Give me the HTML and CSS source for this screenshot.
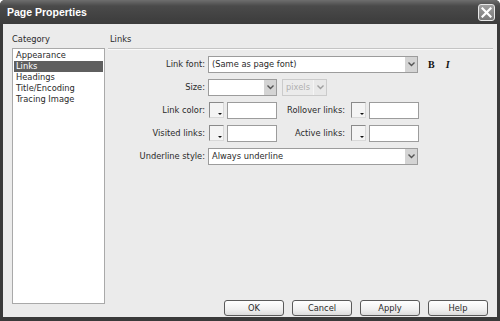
FILE: index.html
```html
<!DOCTYPE html>
<html lang="en">
<head>
    <meta charset="UTF-8">
    <title>Page Properties</title>
    <link rel="stylesheet" href="styles.css">
</head>
<body>
    <div class="dialog">
        <div class="titlebar">
            <span class="title">Page Properties</span>
            <div class="close">
                <svg width="11" height="11" viewBox="0 0 11 11">
                    <path d="M1.5 1.5 L9.5 9.5 M9.5 1.5 L1.5 9.5" stroke="#fff" stroke-width="2.2" stroke-linecap="square"/>
                </svg>
            </div>
        </div>
        <div class="content">
            <div class="category">
                <div class="pane-label">Category</div>
                <ul class="cat-list">
                    <li>Appearance</li>
                    <li class="selected">Links</li>
                    <li>Headings</li>
                    <li>Title/Encoding</li>
                    <li>Tracing Image</li>
                </ul>
            </div>
            <div class="panel">
                <div class="pane-label panel-head">Links</div>
                <div class="form">
                    <div class="row">
                        <label class="label">Link font:</label>
                        <div class="select wide">
                            <span class="value">(Same as page font)</span>
                            <span class="arrow"></span>
                        </div>
                        <span class="style-btn bold">B</span>
                        <span class="style-btn italic">I</span>
                    </div>
                    <div class="row">
                        <label class="label">Size:</label>
                        <div class="select size">
                            <span class="value"></span>
                            <span class="arrow"></span>
                        </div>
                        <div class="select units disabled">
                            <span class="value">pixels</span>
                            <span class="arrow"></span>
                        </div>
                    </div>
                    <div class="row">
                        <label class="label">Link color:</label>
                        <span class="swatch"></span>
                        <input class="color-text" type="text">
                        <label class="label right">Rollover links:</label>
                        <span class="swatch"></span>
                        <input class="color-text" type="text">
                    </div>
                    <div class="row">
                        <label class="label">Visited links:</label>
                        <span class="swatch"></span>
                        <input class="color-text" type="text">
                        <label class="label right">Active links:</label>
                        <span class="swatch"></span>
                        <input class="color-text" type="text">
                    </div>
                    <div class="row">
                        <label class="label">Underline style:</label>
                        <div class="select wide">
                            <span class="value">Always underline</span>
                            <span class="arrow"></span>
                        </div>
                    </div>
                </div>
                <div class="buttons">
                    <button class="btn">OK</button>
                    <button class="btn">Cancel</button>
                    <button class="btn">Apply</button>
                    <button class="btn">Help</button>
                </div>
            </div>
        </div>
    </div>
</body>
</html>
```

FILE: styles.css
```css
body {
    margin: 0;
    font-family: "DejaVu Sans", sans-serif;
    font-size: 8.3px;
    color: #2a2a2a;
    background: #fff;
}

.dialog {
    width: 500px;
    height: 321px;
    background: #3a3a3a;
    border-radius: 5px 5px 0 0;
    display: flex;
    flex-direction: column;
    overflow: hidden;
}

.titlebar {
    height: 24px;
    display: flex;
    align-items: center;
    justify-content: space-between;
    padding: 0 5px 0 7px;
    background: linear-gradient(to bottom, #6e6e6e 0%, #4a4a4a 25%, #414141 70%, #3c3c3c 100%);
}

.title {
    font-family: "Liberation Sans", Arial, sans-serif;
    font-size: 10.5px;
    font-weight: bold;
    color: #fff;
}

.close {
    width: 15px;
    height: 15px;
    border: 1px solid #e8e8e8;
    border-radius: 3px;
    background: linear-gradient(to bottom, #a0a0a0, #7a7a7a);
    display: flex;
    align-items: center;
    justify-content: center;
}

.content {
    flex: 1;
    margin: 0 3px 4px;
    padding: 9px 4px 1px 9px;
    background: #ebebeb;
    display: flex;
    gap: 3px;
}

.pane-label {
    height: 12px;
    line-height: 12px;
}

.category {
    width: 93px;
}

.cat-list {
    list-style: none;
    margin: 3px 0 0;
    padding: 1px 1px 0;
    height: 256px;
    box-sizing: border-box;
    background: #fff;
    border: 1px solid #a9a9a9;
}

.cat-list li {
    height: 11px;
    line-height: 11px;
    padding-left: 2px;
}

.cat-list li.selected {
    background: #5f5f5f;
    color: #fff;
}

.panel {
    flex: 1;
    display: flex;
    flex-direction: column;
}

.panel-head {
    padding-left: 2px;
    border-bottom: 1px solid #c4c4c4;
    box-shadow: 0 1px 0 #fafafa;
    height: 15px;
}

.form {
    padding-top: 6px;
}

.row {
    display: flex;
    align-items: center;
    height: 18px;
    margin-bottom: 5px;
}

.label {
    width: 97px;
    margin-right: 3px;
    text-align: right;
    flex-shrink: 0;
}

.label.right {
    width: 68px;
    margin-right: 5px;
}

.select {
    height: 17px;
    box-sizing: border-box;
    border: 1px solid #9c9c9c;
    background: #fff;
    display: flex;
    align-items: center;
    justify-content: space-between;
    padding-left: 3px;
}

.select.wide {
    width: 210px;
}

.select.size {
    width: 69px;
}

.select.units {
    width: 45px;
    margin-left: 5px;
}

.select.disabled {
    background: #ebebeb;
    border-color: #cbcbcb;
    color: #b0b0b0;
}

.arrow {
    width: 12px;
    height: 15px;
    background: #d4d4d4 url("data:image/svg+xml,%3Csvg xmlns='http://www.w3.org/2000/svg' width='7' height='5'%3E%3Cpath d='M0.5 0.5 L3.5 3.5 L6.5 0.5' fill='none' stroke='%23555' stroke-width='1.4'/%3E%3C/svg%3E") no-repeat center;
    border-left: 1px solid #fff;
}

.disabled .arrow {
    background-color: #e6e6e6;
    opacity: 0.5;
}

.style-btn {
    font-family: "Liberation Serif", serif;
    font-size: 10px;
    font-weight: bold;
    color: #111;
    margin-left: 10px;
}

.style-btn.italic {
    font-style: italic;
    margin-left: 11px;
}

.swatch {
    width: 15px;
    height: 16px;
    box-sizing: border-box;
    border: 1px solid;
    border-color: #8a8a8a #d8d8d8 #d8d8d8 #8a8a8a;
    background: #f4f4f4;
    position: relative;
    margin: 0 3px 0 1px;
}

.swatch::after {
    content: "";
    position: absolute;
    right: 1px;
    bottom: 2px;
    border-left: 2px solid transparent;
    border-right: 2px solid transparent;
    border-top: 2px solid #111;
}

.color-text {
    width: 50px;
    height: 17px;
    box-sizing: border-box;
    border: 1px solid #9c9c9c;
    background: #fff;
    padding: 0;
    margin: 0;
}

.buttons {
    margin-top: auto;
    margin-right: 5px;
    display: flex;
    justify-content: flex-end;
    gap: 8px;
}

.btn {
    width: 60px;
    height: 16px;
    padding: 0;
    font-family: "DejaVu Sans", sans-serif;
    font-size: 8.3px;
    color: #2a2a2a;
    border: 1px solid #5a5a5a;
    border-radius: 3px;
    background: linear-gradient(to bottom, #ffffff, #f0f0f0 60%, #dcdcdc);
}
```
